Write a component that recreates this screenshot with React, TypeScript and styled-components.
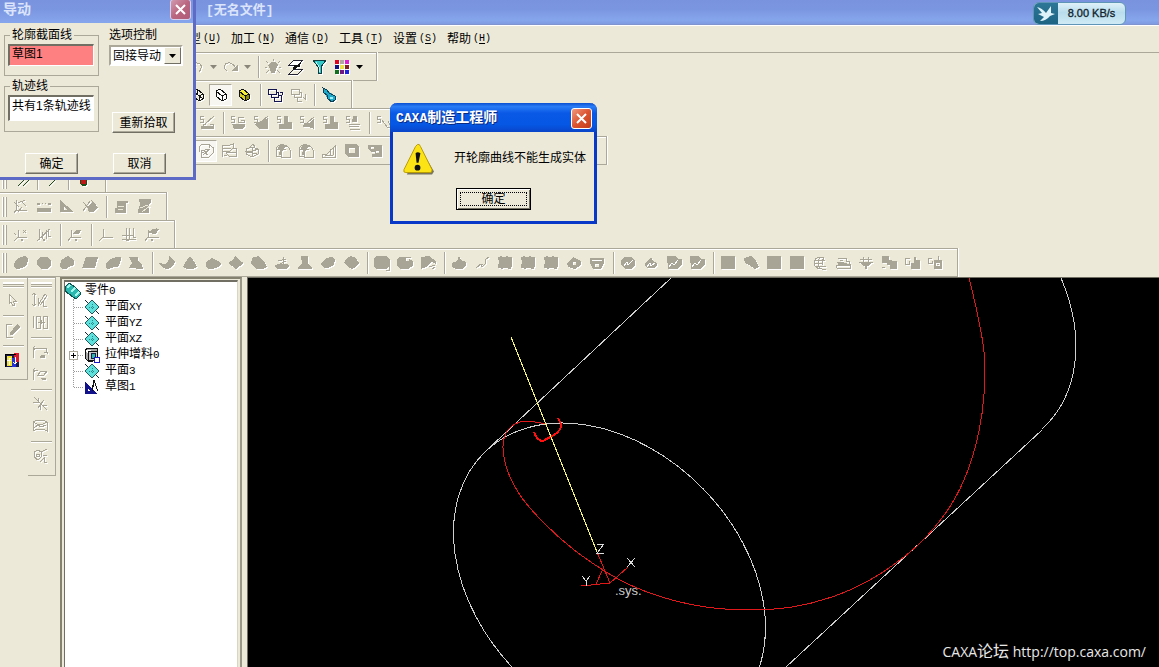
import React from "react";
import styled, { createGlobalStyle, css } from "styled-components";

const FACE = "#ece9d8";
const SHADE = "#aca899";
const DARK = "#716f64";

const Global = createGlobalStyle`
  *, *::before, *::after { box-sizing: border-box; }
  html, body { margin: 0; height: 100%; }
  body, button, input, select, legend {
    font-family: "Liberation Sans", "Noto Sans CJK SC", sans-serif;
    font-size: 12px;
    line-height: 16px;
    color: #000;
  }
  #root { height: 100%; }
`;

const Page = styled.div`
  position: relative;
  display: flex;
  flex-direction: column;
  height: 100vh;
  overflow: hidden;
  background: ${FACE};
`;

const TitleBar = styled.header`
  display: flex;
  align-items: flex-start;
  flex: none;
  height: 25px;
  padding: 0 33px 0 206px;
  background: linear-gradient(#7a93df, #7b96e1 40%, #86a6ec 85%, #7f9ae0);
  border-bottom: 1px solid #8094cf;
`;

const WindowTitle = styled.h1`
  margin: 0;
  font: bold 13px/22px "Liberation Mono", "Noto Sans CJK SC", monospace;
  color: #dbe4fb;
`;

const SpeedBadge = styled.div`
  display: flex;
  align-items: stretch;
  width: 93px;
  height: 23px;
  margin: 2px 0 0 auto;
  border-radius: 6px;
  overflow: hidden;
  border: 1px solid #5f96b8;
  background: linear-gradient(#dff1f9, #b9dcec 45%, #cfeaf5);
`;

const BadgeLogo = styled.span`
  display: grid;
  place-items: center;
  width: 24px;
  background: linear-gradient(#2c7696, #1d6483);
`;

const BadgeText = styled.span`
  flex: 1;
  text-align: center;
  font-size: 11px;
  line-height: 21px;
  color: #10222c;
  -webkit-text-stroke: 0.3px #10222c;
`;

const MenuBar = styled.nav`
  display: flex;
  align-items: center;
  flex: none;
  height: 27px;
  padding-left: 171px;
  border-top: 1px solid #fff;
`;

const MenuItem = styled.button`
  display: flex;
  align-items: center;
  gap: 2px;
  width: 54px;
  padding: 0 6px;
  border: 0;
  background: none;
  white-space: nowrap;
`;

const Key = styled.span`
  font-family: "Liberation Mono", monospace;
  font-size: 10px;
  u { text-underline-offset: 2px; }
`;

const Bars = styled.div`
  display: flex;
  flex-direction: column;
  align-items: flex-start;
  flex: none;
  border-top: 1px solid ${SHADE};
`;

const Bar = styled.div<{ $lead?: number; $tail?: number }>`
  display: flex;
  align-items: center;
  height: 29px;
  margin-top: -1px;
  padding-left: ${(p) => p.$lead ?? 0}px;
  padding-right: ${(p) => p.$tail ?? 11}px;
  border: 1px solid ${SHADE};
  border-left: 0;
  box-shadow: inset 0 1px #fff, 1px 0 #fff;
`;

const Grip = styled.span<{ $flat?: boolean }>`
  flex: none;
  ${(p) =>
    p.$flat
      ? css`height: 5px; margin: 4px 3px 2px; border-top: 2px solid #fff; border-bottom: 1px solid ${SHADE}; box-shadow: 0 1px #fff, inset 0 1px ${SHADE};`
      : css`width: 5px; height: 20px; margin: 0 2px; border-left: 1px solid #fff; border-right: 1px solid ${SHADE}; box-shadow: inset 1px 0 ${SHADE}, inset -1px 0 #fff;`}
`;

const Sep = styled.span<{ $flat?: boolean }>`
  flex: none;
  ${(p) =>
    p.$flat
      ? css`height: 2px; margin: 4px 3px 2px; background: linear-gradient(${SHADE} 50%, #fff 50%);`
      : css`width: 2px; height: 22px; margin: 0 1px 0 5px; background: linear-gradient(90deg, ${SHADE} 50%, #fff 50%);`}
`;

const Tool = styled.button<{ $pressed?: boolean; $size?: number }>`
  display: grid;
  place-items: center;
  flex: none;
  width: ${(p) => p.$size ?? 23}px;
  height: 22px;
  padding: 0;
  border: 1px solid transparent;
  background: none;
  ${(p) =>
    p.$pressed &&
    css`background: #f7f6f0; border-color: ${SHADE} #fff #fff ${SHADE};`}
`;

const Glyph = styled.svg<{ $flat?: boolean }>`
  display: block;
  flex: none;
  width: 16px;
  height: 16px;
  shape-rendering: crispEdges;
  filter: ${(p) => (p.$flat ? "none" : "drop-shadow(1px 1px 0 #fff)")};
`;

/* Each drawing is a list of [mode, path, colour]; f = fill, s = stroke. */
type Part = [mode: "f" | "s", d: string, color?: string];
const G = "#a8a596";
const drawings: Record<string, Part[]> = {
  oval: [["f", "M1 9Q3 4 8 2Q14 0 15 4Q15 11 9 13Q3 15 1 12Z"]],
  disc: [["f", "M5 2H11L15 5V10L11 14H5L1 10V5Z"]],
  blob: [["f", "M2 5L9 1L15 5V10L10 12L7 14H3L1 11Z"]],
  slab: [["f", "M4 2H16L13 13H0Z"]],
  leaf: [["f", "M1 9Q4 2 16 2Q16 9 12 12Q8 12 3 14Q0 12 1 9Z"]],
  twist: [["f", "M1 2H10V6L14 9L15 14H10L6 13H1L4 8Z"]],
  wing: [["f", "M0 8L6 9Q10 8 10 1L16 6Q15 13 8 14Q2 13 0 8Z"]],
  cone: [["f", "M7 2H9L13 8L15 12L11 14H5L1 12L3 8Z"]],
  loaf: [["f", "M1 7L7 3L13 6L16 9L13 12L7 14H3L1 11Z"]],
  gem: [["f", "M7 1L11 5L16 8L12 11L8 14L4 11L0 8L5 5Z"]],
  box: [["f", "M1 3L7 1L13 6L16 12L12 14H5L0 9Z"]],
  dish: [["f", "M4 9H13L16 11L12 14H4L0 11Z"], ["s", "M4 6L12 4M6 9L12 6M9 2V9"]],
  bell: [["f", "M4 1H11V9L15 12V14H1V12L5 9Z"]],
  bean: [["f", "M1 9L6 3L12 2L15 5L14 10L8 13H4Z"]],
  ball: [["f", "M4 3L8 1L13 3L16 8L13 12L9 14L5 12L1 8Z"]],
  rbox: [["f", "M2 1H12L16 5V10L13 14H3L0 12V4Z"], ["s", "M15 11V15H12", G]],
  cut: [["f", "M2 2H9V6H12V4L16 6V11L11 14H3L0 11V5Z"], ["s", "M8 2L14 3"]],
  hatch: [["f", "M1 2L9 1L16 6V9L12 7L6 12L1 14Z"], ["s", "M9 12L15 10M1 6L5 9M12 14L15 12"]],
  drop: [["f", "M8 1L10 5L15 7V11L11 14H5L1 12V8L6 6Z"]],
  curve: [["s", "M2 13L7 9L8 12L12 8L11 5L15 2M5 9L9 10"]],
  block: [["f", "M1 2H3V1H5V2H9V1H11V2H15V12H14V14H11V13H6V14H4V13H1V9H2V5H1Z"]],
  eraser: [["f", "M1 8L7 2L15 6V10L9 14L2 12ZM7 7V10H10V7Z"]],
  cup: [["f", "M1 3H15V8L12 14H4L1 8ZM3 5V6H13V5ZM6 9V12H10V9Z"]],
  weld: [["f", "M4 2H11L15 5V10L11 14H5L1 10V5Z"], ["s", "M4 11L7 7L8 10L13 5", "#fff"]],
  weldS: [["f", "M8 2L10 6L14 8V11L11 13H5L2 11V8Z"], ["s", "M4 12L7 8L8 11L12 8", "#fff"]],
  weldL: [["f", "M1 1H10L12 4L16 4V10L11 14H2Z"], ["s", "M3 12L6 8L8 10L12 5", "#fff"]],
  square: [["f", "M1 1H15V14H1Z"]],
  pill: [["f", "M1 3L8 1L13 6L16 12L12 14L6 10L2 8Z"]],
  globe: [["s", "M12 3Q4 0 2 7Q2 14 10 14H14M3 5H13M2 8H10M3 11H14M8 2Q4 8 8 14M12 3Q9 7 11 10"]],
  layers: [["s", "M3 3H11V6H14L15 9H5M2 7H9M1 10H15V13H2ZM5 5H8"], ["f", "M3 8H12V11H3Z"]],
  basin: [["s", "M2 4H14M1 7H15M5 2V7M10 2V7"], ["f", "M3 8H13L11 11H9V14H7V11H5Z"]],
  pair: [["f", "M1 1H8V5H11V6H16V14H9V10H6V8H1Z"], ["s", "M1 13L4 12"]],
  thumb: [["s", "M6 3H1V9H5V6"], ["f", "M7 8H10V2H12V5H16V14H7Z"]],
  gear: [["s", "M5 3H1V8H5V6M11 1V5"], ["f", "M7 5H15V14H7ZM9 8V11H13V8Z"], ["f", "M10 9H12V10H10Z"]],
  axes: [["s", "M3 1V11H14M3 11L1 14M5 13L9 8M5 4L12 1M8 2L13 7M1 3L6 8"]],
  dots: [["f", "M1 9H15V13H1ZM1 4H4V6H1ZM12 4H15V6H12ZM6 4H7V5H6ZM9 4H10V5H9Z"]],
  triangle: [["f", "M1 1L15 13H1ZM5 8V11H9Z"]],
  pencilBox: [["f", "M5 8L10 4L16 8L11 13H7Z"], ["s", "M1 3L10 13M1 12L8 2M9 1L15 8"]],
  sheet: [["f", "M4 2H15V4H13V14H2V9H4Z"], ["s", "M5 7H11M5 10H10", FACE]],
  sheetX: [["f", "M3 0H15V4L13 5V14H2V11L4 6Z"], ["s", "M4 9L12 6M6 13L14 7", FACE]],
  coord: [["s", "M5 3V10H14M5 10L1 14M10 3L13 6M13 3L10 6M1 6L3 8"], ["f", "M8 12H10V14H8Z"]],
  coord2: [["s", "M3 2V13M1 14L14 2M6 5V12M10 3V12M12 2V9H15"], ["f", "M7 12H9V14H7Z"]],
  coord3: [["s", "M4 3V10H14M4 10L1 14"], ["f", "M6 7L9 3H14L12 7H8ZM8 12H10V14H8Z"]],
  coord4: [["s", "M5 2V10H15M5 10L1 14"]],
  coord5: [["s", "M5 1V12M8 1V12M12 1V10H15M1 12H15M1 8H12"], ["f", "M5 12H8V14H5Z"]],
  coord6: [["s", "M4 3V10H15M4 10L1 14M12 1V4"], ["f", "M3 6L9 2H15L12 7ZM7 12H9V14H7Z"]],
  s1: [["s", "M5 1H1V4H4V7H1M6 9L15 1M4 9V13M14 9V13M4 9H7M11 9H14"], ["f", "M2 11H15V14H2Z"]],
  s2: [["s", "M5 1H1V4H4V7H1M14 2H8V7H14V5H11"], ["f", "M2 9H15V11L12 14H4Z"]],
  s3: [["s", "M5 1H1V4H4V7H1M7 8L15 1"], ["f", "M6 7L15 3V14H6L2 9Z"]],
  s4: [["s", "M5 1H1V4H4V7H1"], ["f", "M8 1H12V7H16V14H3V9H8Z"]],
  s5: [["s", "M5 1H1V4H4V7H1M8 8L15 2"], ["f", "M5 8H10L15 4V14L10 12H4Z"]],
  s6: [["s", "M5 1H1V4H4V7H1M4 9H15M4 11H14M5 14H15"], ["f", "M8 1H12V7H7Z"]],
  s7: [["s", "M5 1H1V4H4V7H1M6 5L11 12H15L12 6"]],
  m1: [["s", "M1 4L4 1H11V5M15 4V10L11 14H3V8L11 6M1 4V9M4 9L10 12M5 12L12 6M12 2L15 5M6 7L9 11"]],
  m2: [["s", "M1 2H9L12 1V5L9 8H2ZM1 3V14M5 9H15V13H8L5 10M12 5H15V10M2 5H10M3 12H6"]],
  m3: [["s", "M2 6L8 4L14 6V11L8 14L2 11ZM8 4V14M1 8L8 8L15 6M9 1L6 4M9 1L11 4M3 9L13 11"]],
  round: [["s", "M1 13V6Q2 1 9 2Q14 3 15 7V14H6V9Q7 6 11 6M1 13H6"], ["f", "M2 7L4 3L8 1L13 3L8 6L6 9V12H4L5 7Z"]],
  bevel: [["s", "M14 2V14H1V11H6L14 3M9 6V12M12 4V12M4 12H12"]],
  frame: [["f", "M1 1H12L15 4V14H4L1 11ZM5 5V10H11V5Z"]],
  puzzle: [["f", "M1 2H15V14H5V11H8V9H4L1 6ZM4 4V6H7V4ZM9 8V10H12V8Z"]],
  undo: [["s", "M2 7H7M2 7V3M2 7Q6 2 11 5Q14 8 10 13"]],
  redo: [["s", "M2 10Q0 5 5 4Q9 3 13 9M2 10L4 12"], ["f", "M8 12H15V5Z"]],
  bulb: [["f", "M6 3H10L13 6L11 10L10 14H6L5 10L3 6Z"], ["s", "M1 2L3 4M15 2L13 4M0 8H2M14 8H16M1 14L4 11M15 14L12 11M8 0V2"]],
  planes: [["f", "M6 1H15L10 6H1Z", "#fff"], ["s", "M6 1H15L10 6H1ZM6 10H15L10 15H1Z", "#223"], ["s", "M13 4L5 11", "#111"], ["f", "M6 6H12V8H10L7 10H5Z", "#111"]],
  funnel: [["f", "M2 1H15L10 8V14H7V8Z", "#35c9c9"], ["s", "M2 1H15L10 8V14H7V8Z", "#123b40"], ["s", "M5 3L8 8V13", "#b8f6f6"]],
  palette: [
    ["f", "M1 1H5V5H1Z", "#e00020"], ["f", "M6 1H10V5H6Z", "#b0a8a0"], ["f", "M11 1H15V5H11Z", "#e020d0"],
    ["f", "M1 6H5V10H1Z", "#101080"], ["f", "M6 6H10V10H6Z", "#e8e048"], ["f", "M11 6H15V10H11Z", "#802020"],
    ["f", "M1 11H5V15H1Z", "#107020"], ["f", "M6 11H10V15H6Z", "#701880"], ["f", "M11 11H15V15H11Z", "#2020e0"],
  ],
  cubeWire: [["s", "M3 4L7 2L13 7V12L9 14L3 9ZM3 4L9 9L13 7M9 9V14M7 2V7L3 9M7 7L13 12", "#111"]],
  cubeLine: [["f", "M3 4L7 2L13 7V12L9 14L3 9Z", "#fff"], ["s", "M3 4L7 2L13 7V12L9 14L3 9ZM3 4L9 9L13 7M9 9V14", "#111"]],
  cubeSolid: [["f", "M3 4L7 2L13 7L9 9Z", "#f5ef3a"], ["f", "M3 4L9 9V14L3 9Z", "#d8d020"], ["f", "M9 9L13 7V12L9 14Z", "#8c8a10"], ["s", "M3 4L7 2L13 7V12L9 14L3 9ZM3 4L9 9L13 7M9 9V14", "#111"]],
  windows: [["s", "M1 2H9V7H1ZM4 7V10H11V5H9M7 10V14H14V8H11M15 5V8M13 6L15 5", "#13134f"]],
  windowsOff: [["s", "M1 2H9V7H1ZM4 7V10H11V5H9M7 10V14H12M15 7V12L13 10"]],
  brush: [["f", "M2 1L6 3L14 9V13L11 15L7 12L3 6Z", "#1fa9c9"], ["s", "M2 1L6 3L8 6L14 9V13L11 15L7 12L6 8L3 6Z", "#0b3f55"], ["f", "M9 10H12V12H9Z", "#9ff0ff"]],
  pointer: [["s", "M5 2V12L7 10L9 14L11 13L9 9H12Z"]],
  pencil: [["s", "M2 2V15H9M3 2H8"], ["f", "M6 11L13 2L16 5L9 13H6Z"]],
  swap: [
    ["f", "M1 2H15V15H1Z", "#161650"], ["f", "M3 4H8V14H3Z", "#f2e52c"], ["f", "M10 1H15V10H10Z", "#d8182c"],
    ["f", "M8 6H12V15H8Z", "#2430d8"], ["s", "M5 13V6H7M3 8H7M11 5V12M9 10L11 12L13 10", "#fff"], ["s", "M1 15V2H12", "#000"],
  ],
  v1: [["s", "M2 1V14M0 3L2 1L4 3M0 12L2 14L4 12M6 14V6M6 13L13 2L15 4L8 13M11 8V14H15"]],
  v2: [["s", "M1 2V14M4 2H8V14H4ZM11 2H15V14H11ZM6 8H13M9 6V10"]],
  v3: [["s", "M1 8V4H14V8M3 2L1 4L3 6M12 8H15V10M1 8V14"], ["f", "M9 11H13V14H8Z"]],
  v4: [["s", "M1 8V4H6M3 2L1 4L3 6M6 9L9 5H15L12 9ZM1 8V14"], ["f", "M9 12H14V14H10Z"]],
  v5: [["s", "M2 1L15 14M1 6H6V2M6 12L12 4M9 9L8 14M10 9H15"]],
  v6: [["s", "M1 4Q8 0 15 4V13Q8 9 1 13ZM1 4Q8 9 15 4M2 10L6 7L9 9L14 7"]],
  v7: [["s", "M2 4L6 2L9 4V9L6 12L2 9ZM4 6H7V8H4ZM9 4L15 1M11 7H15M8 14L12 10V14H15"]],
  slashes: [["s", "M5 15L11 9M10 15L16 9", "#214a21"]],
  slash: [["s", "M5 15L11 9", "#214a21"]],
  dot: [["f", "M5 9H12V13L10 15H7L5 13Z", "#185018"], ["f", "M6 9H11V13H6Z", "#c01818"]],
};

function Icon({ name, color = G, flat }: { name: string; color?: string; flat?: boolean }) {
  return (
    <Glyph viewBox="0 0 16 16" $flat={flat} aria-hidden="true">
      {drawings[name].map(([mode, d, own], i) =>
        mode === "f" ? (
          <path key={i} d={d} fill={own ?? color} fillRule="evenodd" />
        ) : (
          <path key={i} d={d} fill="none" stroke={own ?? color} strokeWidth={1} />
        )
      )}
    </Glyph>
  );
}

const Caret = styled.svg`
  display: block;
  width: 7px;
  height: 4px;
`;
const Down = ({ color = "#000" }: { color?: string }) => (
  <Caret viewBox="0 0 7 4" aria-hidden="true">
    <path d="M0 0H7L3.500 4Z" fill={color} />
  </Caret>
);

/* A group string lists drawings; "|" is a separator and "!" marks a pressed button. */
function Tools({ list, flat }: { list: string; flat?: boolean }) {
  return (
    <>
      {list.split(" ").map((n, i) =>
        n === "|" ? (
          <Sep key={i} $flat={flat} />
        ) : (
          <Tool key={i} type="button" aria-label={n.replace("!", "")} $pressed={n.endsWith("!")}>
            <Icon name={n.replace("!", "")} />
          </Tool>
        )
      )}
    </>
  );
}

const Work = styled.main`
  display: flex;
  flex: 1;
  min-height: 0;
`;

const SideBar = styled.div`
  display: flex;
  flex-direction: column;
  align-self: flex-start;
  width: 28px;
  padding-bottom: 8px;
  border: 1px solid ${SHADE};
  border-left: 0;
  box-shadow: inset 0 1px #fff;
`;

const TreePanel = styled.aside`
  flex: none;
  width: 182px;
  margin: 0 5px 0 4px;
  padding: 1px 2px 0;
  border: 2px solid #85826f;
  border-bottom: 0;
  border-right-color: #9a9788;
`;

const TreeBox = styled.div`
  height: 100%;
  padding-top: 1px;
  background: #fff;
  border-top: 2px solid ${DARK};
  border-left: 1px solid ${DARK};
  border-right: 1px solid #d8d5c5;
`;

const TreeText = styled.span`
  font-family: "Liberation Mono", "Noto Sans CJK SC", monospace;
  font-size: 12px;
  small { font-size: 11px; }
`;

const Root = styled.div`
  display: flex;
  align-items: center;
  gap: 4px;
  height: 16px;
`;

const Branch = styled.ul`
  position: relative;
  margin: 0;
  padding: 0 0 0 19px;
  list-style: none;
  &::before {
    content: "";
    position: absolute;
    left: 8px;
    top: 0;
    bottom: 8px;
    border-left: 1px dotted #999;
  }
`;

const Node = styled.li`
  position: relative;
  display: flex;
  align-items: center;
  gap: 5px;
  height: 16px;
  &::before {
    content: "";
    position: absolute;
    left: -10px;
    width: 9px;
    top: 8px;
    border-top: 1px dotted #999;
  }
`;

const Expander = styled.button`
  position: absolute;
  left: -15px;
  top: 4px;
  width: 9px;
  height: 9px;
  padding: 0;
  border: 1px solid ${SHADE};
  background: linear-gradient(#000, #000) center / 5px 1px no-repeat,
    linear-gradient(#000, #000) center / 1px 5px no-repeat, #fff;
`;

const Viewport = styled.section`
  position: relative;
  display: flex;
  flex: 1;
  align-items: flex-end;
  justify-content: flex-end;
  min-width: 0;
  background: #000;
  border-top: 1px solid ${DARK};
  border-left: 1px solid ${DARK};
`;

const Drawing = styled.svg`
  position: absolute;
  inset: 0;
  width: 100%;
  height: 100%;
  shape-rendering: crispEdges;
`;

const Watermark = styled.p`
  position: relative;
  margin: 0 13px 5px 0;
  font: 400 14px/20px "Open Sans", "Noto Sans CJK SC", sans-serif;
  color: #e8e8e8;
  span { font-size: 16px; }
`;

const DialogBox = styled.form`
  position: absolute;
  top: 0;
  left: 0;
  width: 196px;
  padding-bottom: 3px;
  background: ${FACE};
  border: solid #5d6bc6;
  border-width: 0 3px 3px 0;
`;

const DialogTitle = styled.div`
  display: flex;
  justify-content: space-between;
  height: 23px;
  padding: 0 2px 0 3px;
  font-size: 14px;
  font-weight: bold;
  line-height: 19px;
  color: #dbe4fb;
  background: linear-gradient(#7a93df, #7b96e1 40%, #86a6ec);
`;

const CloseButton = styled.button<{ $active?: boolean }>`
  display: grid;
  place-items: center;
  width: 21px;
  height: 21px;
  margin-top: ${(p) => (p.$active ? 0 : -1)}px;
  padding: 0;
  border: 1px solid #fff;
  border-radius: 3px;
  background: ${(p) =>
    p.$active
      ? "linear-gradient(135deg, #ef9a80, #dc5530 50%, #c33c1a)"
      : "linear-gradient(135deg, #d09ab0, #bb6680 50%, #ad5c78)"};
  border-color: ${(p) => (p.$active ? "#fff" : "#d6d2ee")};
`;

const Cross = () => (
  <svg width="13" height="13" viewBox="0 0 13 13" aria-hidden="true">
    <path d="M2 2L11 11M11 2L2 11" stroke="#fff" strokeWidth="2" />
  </svg>
);

const DialogBody = styled.div`
  display: flex;
  gap: 10px;
  padding: 6px 0 0 4px;
`;

const Column = styled.div<{ $gap: number }>`
  display: flex;
  flex-direction: column;
  align-items: flex-start;
  gap: ${(p) => p.$gap}px;
`;

const Group = styled.fieldset<{ $tall?: boolean }>`
  width: 95px;
  height: ${(p) => (p.$tall ? 52 : 47)}px;
  margin: 0;
  padding: 3px 3px 0;
  border: 1px solid ${SHADE};
`;

const Legend = styled.legend`
  margin-left: 2px;
  padding: 0 2px;
  line-height: 12px;
`;

const Field = styled.input<{ $tall?: boolean; $alert?: boolean }>`
  display: block;
  width: 86px;
  height: ${(p) => (p.$tall ? 26 : 22)}px;
  padding: 0 0 ${(p) => (p.$tall ? 8 : 6)}px 2px;
  border: solid;
  border-width: 2px 1px 1px 2px;
  border-color: ${DARK} #fff #fff ${DARK};
  background: ${(p) => (p.$alert ? "#ff8080" : "#fff")};
`;

const Label = styled.label`
  line-height: 12px;
`;

const Pick = styled.div`
  display: grid;
  width: 74px;
  height: 21px;
  border: 2px solid;
  border-color: ${SHADE} #fff #fff ${SHADE};
  background: #fff;
  grid-template-columns: 1fr 17px;
`;

const PickSelect = styled.select`
  grid-area: 1 / 1 / 2 / 3;
  appearance: none;
  width: 100%;
  height: 17px;
  padding: 0 0 0 2px;
  border: 0;
  background: none;
`;

const PickArrow = styled.span`
  grid-area: 1 / 2;
  display: grid;
  place-items: center;
  pointer-events: none;
  background: ${FACE};
  border: 1px solid;
  border-color: #fff ${DARK} ${DARK} #fff;
`;

const PushButton = styled.button<{ $wide?: boolean }>`
  width: ${(p) => (p.$wide ? 63 : 53)}px;
  height: 21px;
  padding: 0;
  background: ${FACE};
  border: 1px solid;
  border-color: #fff ${DARK} ${DARK} #fff;
  box-shadow: inset -1px -1px ${SHADE};
  line-height: 18px;
`;

const Repick = styled.div`
  padding: 42px 0 0 3px;
`;

const Actions = styled.div`
  display: flex;
  gap: 35px;
  padding: 20px 0 0 25px;
`;

const AlertBox = styled.section`
  position: absolute;
  top: 103px;
  left: 390px;
  width: 207px;
  background: ${FACE};
  border: solid #0838c8;
  border-width: 0 3px 3px;
  border-radius: 7px 7px 0 0;
`;

const AlertTitle = styled.div`
  display: flex;
  align-items: center;
  justify-content: space-between;
  height: 29px;
  margin: 0 -3px;
  padding: 2px 5px 0 6px;
  border-radius: 7px 7px 0 0;
  color: #fff;
  font: bold 14px/20px "Liberation Mono", "Noto Sans CJK SC", monospace;
  background: linear-gradient(#0a4fd0, #2a7cf5 12%, #0a58e6 35%, #0557e4 75%, #0a45c8);
  text-shadow: 1px 1px #0a2a80;
  small { font-size: 13px; }
`;

const AlertBody = styled.div`
  display: flex;
  align-items: flex-start;
  gap: 20px;
  padding: 11px 8px 0 10px;
  p { margin: 7px 0 0; white-space: nowrap; }
`;

const AlertFoot = styled.div`
  display: flex;
  justify-content: center;
  padding: 13px 0 11px;
`;

const DefaultButton = styled(PushButton)`
  width: 75px;
  height: 22px;
  border-color: #000;
  box-shadow: inset 1px 1px #fff, inset -1px -1px ${DARK};
  outline: 1px dotted #000;
  outline-offset: -5px;
`;

const menus = [
  ["造型", "U"], ["加工", "N"], ["通信", "D"], ["工具", "T"], ["设置", "S"], ["帮助", "H"],
];

/* Smooth curve through the points, as Catmull-Rom segments written as beziers. */
function through(points: number[][]) {
  let d = `M${points[0]}`;
  for (let i = 0; i < points.length - 1; i++) {
    const a = points[Math.max(i - 1, 0)];
    const b = points[i];
    const c = points[i + 1];
    const e = points[Math.min(i + 2, points.length - 1)];
    d += `C${b[0] + (c[0] - a[0]) / 6} ${b[1] + (c[1] - a[1]) / 6} ${c[0] - (e[0] - b[0]) / 6} ${c[1] - (e[1] - b[1]) / 6} ${c}`;
  }
  return d;
}

const track = through([
  [969, 278], [977, 312], [984, 352], [984, 394], [979, 431], [968, 470], [951, 505], [926, 537],
  [900, 560], [868, 581], [832, 597], [792, 607], [750, 610], [706, 607], [665, 598], [630, 585],
  [603, 570], [573, 549], [545, 524], [522, 498], [508, 472], [503, 448], [506, 433], [515, 424], [527, 421], [546, 424],
]);

const PlaneIcon = () => (
  <Glyph viewBox="0 0 16 16" $flat aria-hidden="true">
    <path d="M1 1L15 15" stroke="#123" />
    <path d="M8 1L15 8L8 15L1 8Z" fill="#5fe0dc" stroke="#1d5a5c" />
    <path d="M8 5V11M5 8H11" stroke="#2a8a8a" strokeDasharray="1 1" />
  </Glyph>
);

const PartIcon = () => (
  <Glyph viewBox="0 0 16 16" $flat aria-hidden="true">
    <path d="M0 4L4 0L7 2L11 5L15 9V12L11 16L8 14L4 11L0 8Z" fill="#2bb8ae" stroke="#0b5450" />
    <path d="M2 5L5 2M6 9L10 5M10 13L14 9" stroke="#a4f4ec" strokeWidth="2" />
  </Glyph>
);

const ExtrudeIcon = () => (
  <Glyph viewBox="0 0 16 16" $flat aria-hidden="true">
    <path d="M1 3L4 1H13V4M1 3V11L4 14H9" fill="#a9a9a9" stroke="#111" />
    <path d="M4 4H13V13H4Z" fill="#c8c8c8" stroke="#111" />
    <path d="M7 6H11V11H7Z" fill="#2fb3b0" stroke="#124" />
    <path d="M10 10H15V15H10Z" fill="#fff" stroke="#1a1ac0" />
  </Glyph>
);

const SketchIcon = () => (
  <Glyph viewBox="0 0 16 16" $flat aria-hidden="true">
    <path d="M1 3L13 15H1ZM4 10V12H6Z" fill="#12128a" fillRule="evenodd" />
    <path d="M8 12L10 1L13 10V12M10 1L9 8" fill="none" stroke="#111" />
  </Glyph>
);

export default function App() {
  return (
    <Page>
      <Global />
      <TitleBar>
        <WindowTitle>[无名文件]</WindowTitle>
        <SpeedBadge>
          <BadgeLogo>
            <svg width="20" height="18" viewBox="0 0 20 18" aria-hidden="true">
              <path d="M1 2Q6 3 10 8L15 1L15 8L19 9L14 11Q10 16 4 16L8 12L2 9L6 8Z" fill="#dff3fa" />
            </svg>
          </BadgeLogo>
          <BadgeText>8.00 KB/s</BadgeText>
        </SpeedBadge>
      </TitleBar>

      <MenuBar>
        {menus.map(([name, key]) => (
          <MenuItem key={key} type="button">
            {name}
            <Key>(<u>{key}</u>)</Key>
          </MenuItem>
        ))}
      </MenuBar>

      <Bars>
        <Bar $lead={185} $tail={10}>
          <Tool type="button" aria-label="undo"><Icon name="undo" /></Tool>
          <Tool type="button" $size={11} aria-label="undo list"><Down color="#8a877a" /></Tool>
          <Tool type="button" aria-label="redo"><Icon name="redo" /></Tool>
          <Tool type="button" $size={11} aria-label="redo list"><Down color="#8a877a" /></Tool>
          <Tools list="| bulb planes funnel palette" />
          <Tool type="button" $size={13} aria-label="colours"><Down /></Tool>
        </Bar>
        <Bar $lead={186}>
          <Tools list="cubeWire cubeLine! cubeSolid | windows windowsOff | brush" />
        </Bar>
        <Bar $lead={195} $tail={120}>
          <Tools list="s1 | s2 s3 s4 s5 s4 s6 | s7" />
        </Bar>
        <Bar $lead={194} $tail={20}>
          <Tools list="m1! m2 m3 | round round bevel frame puzzle | frame round bevel puzzle frame | round bevel frame" />
        </Bar>
        <Bar>
          <Grip />
          <Tools list="slashes | slash | dot" />
        </Bar>
        <Bar>
          <Grip />
          <Tools list="axes dots triangle pencilBox | sheet sheetX" />
        </Bar>
        <Bar>
          <Grip />
          <Tools list="coord coord2 | coord3 | coord4 coord5 coord6" />
        </Bar>
        <Bar>
          <Grip />
          <Tools list="oval disc blob slab leaf twist | wing cone loaf gem box dish bell bean ball | rbox cut hatch | drop curve block block block eraser cup | weld weldS weldL weldL | square pill square square globe layers basin pair thumb gear" />
        </Bar>
      </Bars>

      <Work>
        <SideBar>
          <Grip $flat />
          <Tools flat list="pointer | pencil |" />
          <Tool type="button" aria-label="swap view"><Icon name="swap" flat /></Tool>
        </SideBar>
        <SideBar>
          <Grip $flat />
          <Tools flat list="v1 v2 | v3 v4 | v5 v6 | v7" />
        </SideBar>

        <TreePanel>
          <TreeBox>
            <Root><PartIcon /><TreeText>零件<small>0</small></TreeText></Root>
            <Branch>
              <Node><PlaneIcon /><TreeText>平面<small>XY</small></TreeText></Node>
              <Node><PlaneIcon /><TreeText>平面<small>YZ</small></TreeText></Node>
              <Node><PlaneIcon /><TreeText>平面<small>XZ</small></TreeText></Node>
              <Node>
                <Expander type="button" aria-label="展开" />
                <ExtrudeIcon /><TreeText>拉伸增料<small>0</small></TreeText>
              </Node>
              <Node><PlaneIcon /><TreeText>平面<small>3</small></TreeText></Node>
              <Node><SketchIcon /><TreeText>草图<small>1</small></TreeText></Node>
            </Branch>
          </TreeBox>
        </TreePanel>

        <Viewport>
          <Drawing>
            <g transform="translate(-248 -278)" fill="none" strokeWidth="1">
              <g stroke="#cfcfcf">
                <ellipse cx="609.500" cy="580" rx="178.600" ry="130.700" transform="rotate(45.600 609.500 580)" />
                <path d="M487 450L671 278M786 667L1042 430" />
                <path d="M1042 429A178.600 130.700 45.600 0 0 1061 278" />
              </g>
              <path d={track} stroke="#e0181c" />
              <path d="M534 432C536 438 539 441 543 441L554 435C560 431 562 428 561 424L558 418" stroke="#ff1010" strokeWidth="2" />
              <path d="M511 337L597 552" stroke="#f6f66a" />
              <path d="M597 552L610 583L628 567M610 583L581 586M603 569L596 584" stroke="#e01818" />
              <path d="M597 544H604L597 553H604M627 558L635 567M635 558L627 567M582 576L586 581L590 576M586 581V586" stroke="#ddd" />
              <text x="615" y="595" fill="#ccc" fontFamily="Liberation Sans, sans-serif" fontSize="13">.sys.</text>
            </g>
          </Drawing>
          <Watermark>CAXA<span>论坛</span> http://top.caxa.com/</Watermark>
        </Viewport>
      </Work>

      <DialogBox onSubmit={(e) => e.preventDefault()}>
        <DialogTitle>
          导动
          <CloseButton type="button" aria-label="关闭"><Cross /></CloseButton>
        </DialogTitle>
        <DialogBody>
          <Column $gap={4}>
            <Group>
              <Legend>轮廓截面线</Legend>
              <Field $alert aria-label="轮廓截面线" defaultValue="草图1" />
            </Group>
            <Group $tall>
              <Legend>轨迹线</Legend>
              <Field $tall aria-label="轨迹线" defaultValue="共有1条轨迹线" />
            </Group>
          </Column>
          <Column $gap={4}>
            <Label htmlFor="mode">选项控制</Label>
            <Pick>
              <PickSelect id="mode" defaultValue="fixed">
                <option value="fixed">固接导动</option>
              </PickSelect>
              <PickArrow><Down /></PickArrow>
            </Pick>
            <Repick><PushButton type="button" $wide>重新拾取</PushButton></Repick>
          </Column>
        </DialogBody>
        <Actions>
          <PushButton type="submit">确定</PushButton>
          <PushButton type="button">取消</PushButton>
        </Actions>
      </DialogBox>

      <AlertBox role="alertdialog" aria-label="CAXA制造工程师">
        <AlertTitle>
          <span><small>CAXA</small>制造工程师</span>
          <CloseButton type="button" $active aria-label="关闭"><Cross /></CloseButton>
        </AlertTitle>
        <AlertBody>
          <svg width="32" height="32" viewBox="0 0 32 32" aria-hidden="true">
            <path d="M17 3L32 29L30 32H4Z" fill="#77745f" />
            <path d="M15 1Q17 0 18 3L30 27Q30 30 28 30H3Q0 30 1 27L13 3Z" fill="#fbe316" stroke="#b89a00" />
            <path d="M13 10Q15 8 18 10L16 20H14Z" fill="#111" />
            <circle cx="15" cy="25" r="3" fill="#111" />
          </svg>
          <p>开轮廓曲线不能生成实体</p>
        </AlertBody>
        <AlertFoot>
          <DefaultButton type="button">确定</DefaultButton>
        </AlertFoot>
      </AlertBox>
    </Page>
  );
}
